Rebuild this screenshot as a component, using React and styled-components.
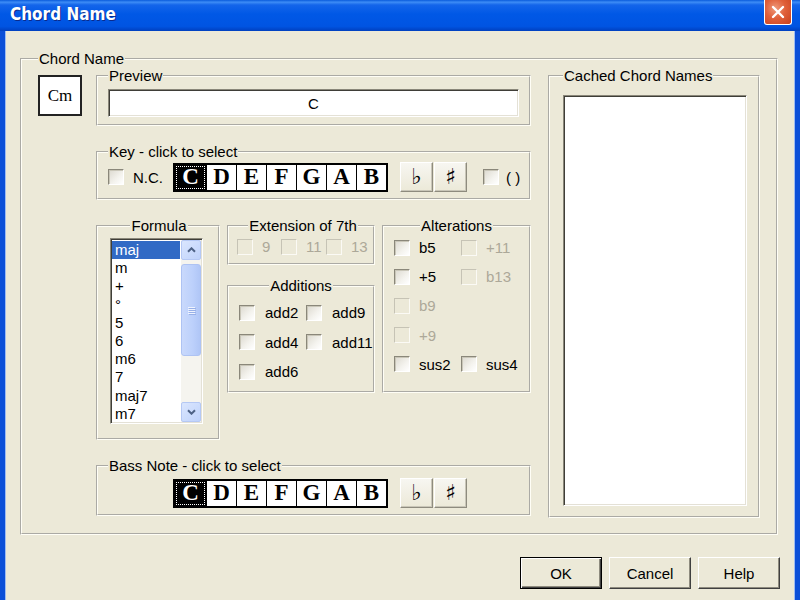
import React from 'react';
import styled, { createGlobalStyle, css } from 'styled-components';

const GlobalStyle = createGlobalStyle`
  html, body {
    margin: 0;
    padding: 0;
  }
  body {
    width: 800px;
    height: 600px;
    overflow: hidden;
    background: #ece9d8;
    font-family: "Liberation Sans", Arial, sans-serif;
    font-size: 15px;
    color: #000;
  }
`;

const Window = styled.div`
  width: 800px;
  height: 600px;
  display: flex;
  flex-direction: column;
`;

const TitleBar = styled.div`
  height: 31px;
  flex: none;
  box-sizing: border-box;
  display: flex;
  justify-content: space-between;
  padding: 0 8px 0 10px;
  background: linear-gradient(
    to bottom,
    #0a5bdc 0%,
    #3d8cf6 7%,
    #1465ea 16%,
    #0058e6 45%,
    #0054e2 85%,
    #003fbf 100%
  );
`;

const TitleText = styled.span`
  align-self: center;
  margin-top: -4px;
  color: #fff;
  font: bold 17px "DejaVu Sans Condensed", "Liberation Sans", sans-serif;
  text-shadow: 1px 1px 0 #0b2a8c;
`;

const CloseButton = styled.div`
  width: 28px;
  height: 25px;
  box-sizing: border-box;
  border: 1px solid #fff;
  border-top: none;
  border-radius: 0 0 3px 3px;
  background: radial-gradient(circle at 40% 35%, #ef9a7a 0%, #e0603a 45%, #c8401c 100%);
  display: flex;
  align-items: center;
  justify-content: center;
`;

const Frame = styled.div`
  flex: 1;
  display: flex;
  flex-direction: column;
  border-left: 5px solid #0b4fd8;
  border-right: 5px solid #0b4fd8;
  box-shadow: inset 1px 0 #9dbcf3, inset -1px 0 #9dbcf3;
  padding: 20px 15px 0 15px;
`;

const Group = styled.fieldset`
  box-sizing: border-box;
  margin: 0;
  min-width: 0;
  width: ${(p) => p.$w}px;
  height: ${(p) => p.$h}px;
  padding: ${(p) => p.$pad || '0 10px'};
  border: 2px groove #fffef6;
  flex: none;
`;

const Legend = styled.legend`
  padding: 0 1px;
  margin: ${(p) => (p.$center ? '0 auto' : '0')};
  font-size: 15px;
  line-height: 16px;
`;

const OuterRow = styled.div`
  display: flex;
  align-items: flex-start;
`;

const CmBox = styled.div`
  width: 44px;
  height: 41px;
  box-sizing: border-box;
  margin: 7px 14px 0 0;
  border: 2px solid #222;
  background: #fff;
  display: flex;
  align-items: center;
  justify-content: center;
  font: 17px "Liberation Serif", "Times New Roman", serif;
  flex: none;
`;

const MainCol = styled.div`
  width: 435px;
  margin-right: 17px;
  display: flex;
  flex-direction: column;
  gap: 18px;
  flex: none;
`;

const sunken = css`
  box-sizing: border-box;
  background: #fff;
  border: 1px solid;
  border-color: #8a877a #fff #fff #8a877a;
  box-shadow: inset 1px 1px 0 #3f3e38, inset -1px -1px 0 #e4e1d6;
`;

const TextField = styled.div`
  ${sunken};
  margin-top: 5px;
  height: 28px;
  display: flex;
  align-items: center;
  justify-content: center;
  font-size: 15px;
`;

const ControlRow = styled.div`
  display: flex;
  align-items: center;
  height: 30px;
  margin-top: ${(p) => p.$top || 0}px;
  padding-left: ${(p) => p.$left || 0}px;
`;

const Check = styled.span`
  display: inline-block;
  flex: none;
  width: 16px;
  height: 16px;
  box-sizing: border-box;
  margin-left: ${(p) => p.$ml || 0}px;
  border: 1px solid;
  ${(p) =>
    p.$disabled
      ? css`
          border-color: #c6c3b5 #fbfaf5 #fbfaf5 #c6c3b5;
          background: #ece9d8;
        `
      : css`
          border-color: #8a877a #fff #fff #8a877a;
          background: linear-gradient(135deg, #dcd9cf 0%, #f4f3ee 60%, #fff 100%);
          box-shadow: inset 1px 1px 0 #c9c6b8;
        `}
`;

const Label = styled.span`
  margin-left: ${(p) => p.$ml || 0}px;
  font-size: 15px;
  white-space: nowrap;
  color: ${(p) => (p.$disabled ? '#aca899' : '#000')};
`;

const NoteStrip = styled.div`
  display: flex;
  margin-left: ${(p) => p.$ml || 0}px;
  border: 2px solid #000;
  background: #fff;
`;

const NoteCell = styled.div`
  width: ${(p) => (p.$active ? 31 : 29)}px;
  height: 25px;
  display: flex;
  align-items: center;
  justify-content: center;
  font: bold 23px "Liberation Serif", "Times New Roman", serif;
  border-left: 1px solid #000;
  &:first-child {
    border-left: none;
  }
  ${(p) =>
    p.$active &&
    css`
      background: #000;
      color: #fff;
      outline: 1px dotted #fff;
      outline-offset: -2px;
    `}
`;

const AccGroup = styled.div`
  display: flex;
  gap: 1px;
  margin-left: ${(p) => p.$ml || 0}px;
`;

const AccButton = styled.div`
  width: 33px;
  height: 30px;
  box-sizing: border-box;
  display: flex;
  align-items: center;
  justify-content: center;
  padding-bottom: 2px;
  border: 1px solid;
  border-color: #fff #8e8b7e #8e8b7e #fff;
  box-shadow: inset -1px -1px 0 #c9c6b8;
  background: linear-gradient(to bottom, #f7f6f1, #ece9d8);
  font: bold 22px "DejaVu Sans", sans-serif;
`;

const FormulaRow = styled.div`
  display: flex;
  gap: 7px;
  align-items: flex-start;
`;

const MidCol = styled.div`
  display: flex;
  flex-direction: column;
  gap: 13px;
`;

const OptGrid = styled.div`
  display: grid;
  grid-template-columns: ${(p) => p.$cols};
  grid-auto-rows: ${(p) => p.$row}px;
  align-items: center;
  margin-top: ${(p) => p.$top || 0}px;
`;

const Opt = styled.div`
  display: flex;
  align-items: center;
`;

const ListBox = styled.div`
  ${sunken};
  width: ${(p) => p.$w}px;
  height: ${(p) => p.$h}px;
  margin-top: ${(p) => p.$top || 0}px;
  display: flex;
  padding: 1px;
`;

const ListItems = styled.div`
  flex: 1;
  padding-top: 1px;
`;

const ListItem = styled.div`
  height: 18.2px;
  line-height: 18px;
  padding-left: 3px;
  margin-right: 1px;
  font-size: 15px;
  ${(p) =>
    p.$selected &&
    css`
      background: #316ac5;
      color: #fff;
    `}
`;

const ScrollBar = styled.div`
  width: 20px;
  display: flex;
  flex-direction: column;
  background: #f5f4ef;
`;

const ScrollArrow = styled.div`
  height: 20px;
  box-sizing: border-box;
  border: 1px solid #b5c8f4;
  border-radius: 2px;
  background: linear-gradient(135deg, #dae6fe 0%, #bfd2fb 100%);
  display: flex;
  align-items: center;
  justify-content: center;
`;

const ScrollTrack = styled.div`
  flex: 1;
  padding-top: 4px;
`;

const Thumb = styled.div`
  height: 92px;
  box-sizing: border-box;
  border: 1px solid #aec3f3;
  border-radius: 3px;
  background: linear-gradient(to right, #c9d9fc 0%, #bcd0fb 60%, #b0c6f6 100%);
  display: flex;
  flex-direction: column;
  align-items: center;
  justify-content: center;
  gap: 1px;
`;

const Grip = styled.span`
  width: 7px;
  height: 1px;
  background: #eef3fe;
  box-shadow: 1px 1px 0 #98b0e8;
`;

const Footer = styled.div`
  display: flex;
  justify-content: flex-end;
  gap: 7px;
  margin-top: 22px;
`;

const DlgButton = styled.div`
  width: 82px;
  height: 32px;
  box-sizing: border-box;
  display: flex;
  align-items: center;
  justify-content: center;
  font-size: 15px;
  background: #ece9d8;
  border: 1px solid;
  ${(p) =>
    p.$default
      ? css`
          border-color: #000;
          box-shadow: inset 1px 1px 0 #fff, inset -1px -1px 0 #404040, inset -2px -2px 0 #8e8b7e;
        `
      : css`
          border-color: #fff #404040 #404040 #fff;
          box-shadow: inset -1px -1px 0 #8e8b7e;
        `}
`;

const NOTES = ['C', 'D', 'E', 'F', 'G', 'A', 'B'];
const FORMULAS = ['maj', 'm', '+', '°', '5', '6', 'm6', '7', 'maj7', 'm7'];

function Notes({ ml }) {
  return (
    <NoteStrip $ml={ml}>
      {NOTES.map((n, i) => (
        <NoteCell key={n} $active={i === 0}>
          {n}
        </NoteCell>
      ))}
    </NoteStrip>
  );
}

function Accidentals() {
  return (
    <AccGroup $ml={12}>
      <AccButton>♭</AccButton>
      <AccButton>♯</AccButton>
    </AccGroup>
  );
}

function Option({ label, disabled, gap = 9 }) {
  return (
    <Opt>
      <Check $disabled={disabled} />
      <Label $ml={gap} $disabled={disabled}>
        {label}
      </Label>
    </Opt>
  );
}

const Chevron = ({ down }) => (
  <svg width="9" height="6" viewBox="0 0 9 6">
    <path
      d={down ? 'M1 1.2 L4.5 4.7 L8 1.2' : 'M1 4.8 L4.5 1.3 L8 4.8'}
      fill="none"
      stroke="#4d6185"
      strokeWidth="2"
    />
  </svg>
);

function App() {
  return (
    <>
      <GlobalStyle />
      <Window>
        <TitleBar>
          <TitleText>Chord Name</TitleText>
          <CloseButton>
            <svg width="14" height="14" viewBox="0 0 14 14">
              <path d="M2 2 L12 12 M12 2 L2 12" stroke="#fff" strokeWidth="2.4" strokeLinecap="round" />
            </svg>
          </CloseButton>
        </TitleBar>
        <Frame>
          <Group $w={758} $h={484} $pad="1px 16px 0 16px">
            <Legend>Chord Name</Legend>
            <OuterRow>
              <CmBox>Cm</CmBox>
              <MainCol>
                <Group $w={435} $h={58}>
                  <Legend>Preview</Legend>
                  <TextField>C</TextField>
                </Group>

                <Group $w={435} $h={56}>
                  <Legend>Key - click to select</Legend>
                  <ControlRow $top={2}>
                    <Check />
                    <Label $ml={9}>N.C.</Label>
                    <Notes ml={10} />
                    <Accidentals />
                    <Check $ml={16} />
                    <Label $ml={7}>( )</Label>
                  </ControlRow>
                </Group>

                <FormulaRow>
                  <Group $w={124} $h={222} $pad="0 10px 0 12px">
                    <Legend $center>Formula</Legend>
                    <ListBox $w={93} $h={186} $top={4}>
                      <ListItems>
                        {FORMULAS.map((f, i) => (
                          <ListItem key={f} $selected={i === 0}>
                            {f}
                          </ListItem>
                        ))}
                      </ListItems>
                      <ScrollBar>
                        <ScrollArrow>
                          <Chevron />
                        </ScrollArrow>
                        <ScrollTrack>
                          <Thumb>
                            <Grip />
                            <Grip />
                            <Grip />
                            <Grip />
                          </Thumb>
                        </ScrollTrack>
                        <ScrollArrow>
                          <Chevron down />
                        </ScrollArrow>
                      </ScrollBar>
                    </ListBox>
                  </Group>

                  <MidCol>
                    <Group $w={148} $h={47} $pad="0 4px 0 8px">
                      <Legend $center>Extension of 7th</Legend>
                      <OptGrid $cols="44px 45px auto" $row={17} $top={4}>
                        <Option label="9" disabled />
                        <Option label="11" disabled />
                        <Option label="13" disabled />
                      </OptGrid>
                    </Group>
                    <Group $w={148} $h={115}>
                      <Legend $center>Additions</Legend>
                      <OptGrid $cols="67px auto" $row={29.5} $top={4}>
                        <Option label="add2" gap={10} />
                        <Option label="add9" gap={10} />
                        <Option label="add4" gap={10} />
                        <Option label="add11" gap={10} />
                        <Option label="add6" gap={10} />
                      </OptGrid>
                    </Group>
                  </MidCol>

                  <Group $w={149} $h={175}>
                    <Legend $center>Alterations</Legend>
                    <OptGrid $cols="67px auto" $row={29.2} $top={-1}>
                      <Option label="b5" />
                      <Option label="+11" disabled />
                      <Option label="+5" />
                      <Option label="b13" disabled />
                      <Option label="b9" disabled />
                      <span />
                      <Option label="+9" disabled />
                      <span />
                      <Option label="sus2" />
                      <Option label="sus4" />
                    </OptGrid>
                  </Group>
                </FormulaRow>

                <Group $w={435} $h={58}>
                  <Legend>Bass Note - click to select</Legend>
                  <ControlRow $top={4} $left={65}>
                    <Notes ml={0} />
                    <Accidentals />
                  </ControlRow>
                </Group>
              </MainCol>

              <Group $w={212} $h={450} $pad="11px 10px 0 13px">
                <Legend>Cached Chord Names</Legend>
                <ListBox $w={184} $h={411} />
              </Group>
            </OuterRow>
          </Group>
          <Footer>
            <DlgButton $default>OK</DlgButton>
            <DlgButton>Cancel</DlgButton>
            <DlgButton>Help</DlgButton>
          </Footer>
        </Frame>
      </Window>
    </>
  );
}

export default App;
